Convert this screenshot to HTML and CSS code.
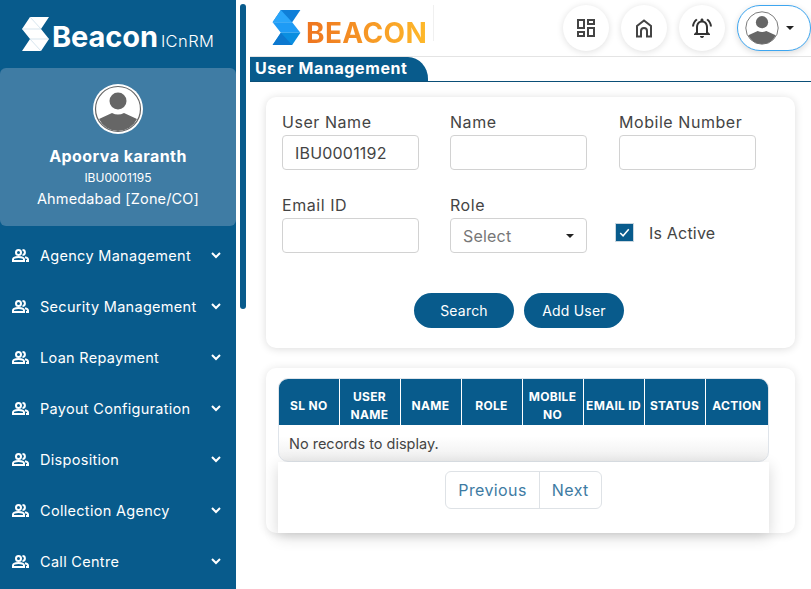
FILE: index.html
```html
<!DOCTYPE html>
<html>
<head>
  <title>Beacon | User Management</title>
  <meta charset="UTF-8">
  <meta name="viewport" content="width=device-width, initial-scale=1.0">
  <link rel="stylesheet" href="styles.css">
</head>
<body>
  <svg class="defs" width="0" height="0">
    <symbol id="avatar" viewBox="0 0 50 50">
      <circle cx="25" cy="25" r="25" fill="#fff"/>
      <circle cx="25" cy="25" r="22.500" fill="#fff" stroke="#666" stroke-width="1.200"/>
      <circle cx="25" cy="17" r="8.500" fill="#666"/>
      <path d="M6 35l13-6q6 3 12 0l13 6a21 21 0 0 1-38 0z" fill="#666"/>
    </symbol>
    <symbol id="users" viewBox="0 0 17 13">
      <path fill="none" stroke="#fff" stroke-width="2" d="M1 12v-1.500C1 9 3.500 8 6.500 8s5.500 1 5.500 2.500V12zM6.500 6a2.400 2.400 0 1 0 0-5 2.400 2.400 0 0 0 0 5z"/>
      <path fill="none" stroke="#fff" stroke-width="2" d="M10.500 1.100a2.400 2.400 0 0 1 0 4.800M13 8.200c1.700.4 3 1.200 3 2.300V12h-2"/>
    </symbol>
    <symbol id="chev" viewBox="0 0 10 7">
      <path fill="none" stroke="#fff" stroke-width="2" d="M1 1l4 4 4-4"/>
    </symbol>
  </svg>

  <aside class="sidebar">
    <div class="brand">
      <svg class="brand-mark" viewBox="0 0 27 34">
        <path fill="#fff" d="M8 0h19l-8 12 8 10-8 12H0l8-12-8-10z"/>
        <path fill="none" stroke="#bcd3e2" stroke-width=".6" d="M0 12h19M8 22h19M8 0l11 12M8 22l11 12"/>
      </svg>
      <span class="brand-name">Beacon</span>
      <span class="brand-sub">ICnRM</span>
    </div>

    <div class="profile">
      <svg class="profile-pic"><use href="#avatar"/></svg>
      <div class="profile-name">Apoorva karanth</div>
      <div class="profile-id">IBU0001195</div>
      <div class="profile-zone">Ahmedabad [Zone/CO]</div>
    </div>

    <ul class="menu">
      <li><svg class="menu-icon"><use href="#users"/></svg><span>Agency Management</span><svg class="menu-chev"><use href="#chev"/></svg></li>
      <li><svg class="menu-icon"><use href="#users"/></svg><span>Security Management</span><svg class="menu-chev"><use href="#chev"/></svg></li>
      <li><svg class="menu-icon"><use href="#users"/></svg><span>Loan Repayment</span><svg class="menu-chev"><use href="#chev"/></svg></li>
      <li><svg class="menu-icon"><use href="#users"/></svg><span>Payout Configuration</span><svg class="menu-chev"><use href="#chev"/></svg></li>
      <li><svg class="menu-icon"><use href="#users"/></svg><span>Disposition</span><svg class="menu-chev"><use href="#chev"/></svg></li>
      <li><svg class="menu-icon"><use href="#users"/></svg><span>Collection Agency</span><svg class="menu-chev"><use href="#chev"/></svg></li>
      <li><svg class="menu-icon"><use href="#users"/></svg><span>Call Centre</span><svg class="menu-chev"><use href="#chev"/></svg></li>
    </ul>
  </aside>

  <div class="gutter"><div class="thumb"></div></div>

  <div class="main">
    <header class="topbar">
      <div class="logo">
        <svg class="logo-mark" viewBox="0 0 27 34">
          <path fill="#0f7fd8" d="M8 0h19l-8 12H0z"/>
          <path fill="#1e9bf5" d="M0 12h19l8 10H8z"/>
          <path fill="#0a8ee0" d="M8 22h19l-8 12H0z"/>
          <path fill="#2aa6fa" d="M8 0l11 12H0z"/>
          <path fill="#0d78cf" d="M8 22l11 12H0z"/>
        </svg>
        <span class="logo-text">BEACON</span>
      </div>
      <div class="top-actions">
        <button class="round-btn">
          <svg viewBox="0 0 24 24"><path fill="#444" d="M19 5v2h-4V5h4M9 5v6H5V5h4m10 8v6h-4v-6h4M9 17v2H5v-2h4M21 3h-8v6h8V3zM11 3H3v10h8V3zm10 8h-8v10h8V11zm-10 4H3v6h8v-6z"/></svg>
        </button>
        <button class="round-btn">
          <svg viewBox="0 0 24 24"><path fill="none" stroke="#444" stroke-width="2" d="M5 20.500V10l7-5.500 7 5.500v10.500h-4V15a3 3 0 0 0-6 0v5.500z"/></svg>
        </button>
        <button class="round-btn">
          <svg viewBox="0 0 24 24"><path fill="#333" d="M7.580 4.080L6.150 2.650C3.750 4.480 2.170 7.300 2.030 10.500h2c.15-2.650 1.510-4.970 3.550-6.420zm12.390 6.420h2c-.15-3.200-1.730-6.020-4.120-7.850l-1.420 1.430c2.020 1.450 3.390 3.770 3.540 6.420zM18 11c0-3.070-1.640-5.640-4.500-6.320V4c0-.83-.67-1.500-1.500-1.500s-1.500.67-1.500 1.500v.68C7.630 5.360 6 7.920 6 11v5l-2 2v1h16v-1l-2-2v-5zm-2 6H8v-6c0-2.480 1.510-4.500 4-4.500s4 2.020 4 4.500v6zm-4 5c.14 0 .27-.01.4-.04.65-.14 1.180-.58 1.440-1.180.1-.24.15-.5.15-.78h-4c.01 1.100.9 2 2.010 2z"/></svg>
        </button>
        <button class="user-pill">
          <svg class="user-pic"><use href="#avatar"/></svg>
          <span class="caret"></span>
        </button>
      </div>
    </header>

    <div class="title-row">
      <h1 class="title-tab">User Management</h1>
    </div>

    <section class="card search-card">
      <div class="form-grid">
        <div class="field">
          <label>User Name</label>
          <input type="text" value="IBU0001192">
        </div>
        <div class="field">
          <label>Name</label>
          <input type="text">
        </div>
        <div class="field">
          <label>Mobile Number</label>
          <input type="text">
        </div>
        <div class="field">
          <label>Email ID</label>
          <input type="text">
        </div>
        <div class="field">
          <label>Role</label>
          <div class="select">Select<span class="caret"></span></div>
        </div>
        <div class="check-field">
          <span class="checkbox">
            <svg viewBox="0 0 18 18"><path fill="none" stroke="#fff" stroke-width="1.600" d="M4.500 9.500l3 3 6-7"/></svg>
          </span>
          <span class="check-label">Is Active</span>
        </div>
      </div>
      <div class="form-actions">
        <button class="pill-btn">Search</button>
        <button class="pill-btn">Add User</button>
      </div>
    </section>

    <section class="card table-card">
      <div class="table-wrap">
        <table class="grid">
          <thead>
            <tr>
              <th>SL NO</th>
              <th>USER NAME</th>
              <th>NAME</th>
              <th>ROLE</th>
              <th>MOBILE NO</th>
              <th>EMAIL ID</th>
              <th>STATUS</th>
              <th>ACTION</th>
            </tr>
          </thead>
          <tbody>
            <tr><td colspan="8">No records to display.</td></tr>
          </tbody>
        </table>
      </div>
      <div class="pager-panel">
        <div class="pager">
          <a class="pager-link">Previous</a>
          <a class="pager-link">Next</a>
        </div>
      </div>
    </section>
  </div>
</body>
</html>
```

FILE: styles.css
```css
* {
  box-sizing: border-box;
}

html, body {
  height: 100%;
}

body {
  margin: 0;
  display: flex;
  overflow: hidden;
  background-color: #fff;
  font-family: Inter, "Open Sans", sans-serif;
  color: #444;
}

.defs {
  position: absolute;
}

/* sidebar */
.sidebar {
  width: 236px;
  flex-shrink: 0;
  height: 100%;
  background-color: #085b8c;
  color: #fff;
  overflow: hidden;
}

.brand {
  display: flex;
  align-items: flex-end;
  height: 68px;
  padding: 17px 0 17px 22px;
}

.brand-mark {
  width: 27px;
  height: 34px;
  flex-shrink: 0;
}

.brand-name {
  margin-left: 3px;
  font-size: 29px;
  line-height: 28px;
  font-weight: 700;
  letter-spacing: -0.1px;
}

.brand-sub {
  margin-left: 3px;
  margin-bottom: 1px;
  font-size: 16.500px;
  line-height: 18px;
  font-weight: 300;
  letter-spacing: 0.4px;
}

.profile {
  height: 158px;
  background-color: #3f7ca4;
  border-radius: 6px;
  padding-top: 16px;
  text-align: center;
}

.profile-pic {
  display: block;
  width: 50px;
  height: 50px;
  margin: 0 auto;
}

.profile-name {
  margin-top: 12px;
  font-size: 16px;
  line-height: 20px;
  font-weight: 700;
  letter-spacing: 0.45px;
}

.profile-id {
  margin-top: 4px;
  font-size: 12px;
  line-height: 16px;
}

.profile-zone {
  margin-top: 4px;
  font-size: 14.500px;
  line-height: 18px;
  letter-spacing: 0.15px;
}

.menu {
  list-style-type: none;
  margin: 0;
  padding: 4px 0 0;
}

.menu li {
  display: flex;
  align-items: center;
  height: 51px;
  padding-left: 12px;
  font-size: 14.500px;
  letter-spacing: 0.3px;
}

.menu-icon {
  width: 17px;
  height: 13px;
  flex-shrink: 0;
}

.menu li span {
  margin-left: 11px;
  flex: 1;
  white-space: nowrap;
}

.menu-chev {
  width: 10px;
  height: 7px;
  margin-right: 15px;
  flex-shrink: 0;
}

/* fake scrollbar next to the sidebar */
.gutter {
  width: 14px;
  flex-shrink: 0;
  padding: 4px 0 0 4px;
}

.thumb {
  width: 6px;
  height: 305px;
  background-color: #085b8c;
  border-radius: 3px;
}

/* main column */
.main {
  flex: 1;
  min-width: 0;
}

.topbar {
  display: flex;
  align-items: flex-start;
  justify-content: space-between;
  height: 57px;
  border-bottom: 1px solid #e4e4e4;
}

.logo {
  display: flex;
  align-items: flex-start;
  height: 36px;
  width: 184px;
  margin-top: 5px;
  padding: 5px 0 0 22px;
  border-right: 1px solid #f0f0f0;
}

.logo-mark {
  width: 29px;
  height: 35px;
  flex-shrink: 0;
}

.logo-text {
  margin-left: 5px;
  margin-top: 8px;
  font-size: 28px;
  line-height: 30px;
  font-weight: 700;
  letter-spacing: 0.4px;
  background: linear-gradient(to right, #ee7420, #feb92a);
  -webkit-background-clip: text;
  background-clip: text;
  color: transparent;
}

.top-actions {
  display: flex;
  align-items: center;
  gap: 12px;
  padding-top: 5px;
}

.round-btn {
  display: flex;
  align-items: center;
  justify-content: center;
  width: 46px;
  height: 46px;
  padding: 0;
  background-color: #fff;
  border: none;
  border-radius: 50%;
  box-shadow: 0 1px 7px rgba(0, 0, 0, 0.13);
}

.round-btn svg {
  width: 24px;
  height: 24px;
}

.user-pill {
  display: flex;
  align-items: center;
  gap: 6px;
  width: 74px;
  height: 46px;
  padding: 0 0 0 6px;
  background-color: #fff;
  border: 1px solid #3ea6f0;
  border-radius: 23px;
  box-shadow: 0 2px 6px rgba(0, 0, 0, 0.15);
}

.user-pic {
  width: 36px;
  height: 36px;
}

.caret {
  display: block;
  width: 0;
  height: 0;
  border-left: 4px solid transparent;
  border-right: 4px solid transparent;
  border-top: 4px solid #222;
}

.title-row {
  height: 25px;
  border-bottom: 1px solid #0b4f78;
}

.title-tab {
  width: 178px;
  height: 24px;
  margin: 0;
  padding-left: 5px;
  background-color: #085b8c;
  border-top-right-radius: 20px 22px;
  color: #fff;
  font-size: 16px;
  line-height: 23px;
  font-weight: 700;
  letter-spacing: 0.6px;
  white-space: nowrap;
}

.card {
  width: 529px;
  margin-left: 16px;
  background-color: #fff;
  border-radius: 10px;
  box-shadow: 0 1px 8px rgba(0, 0, 0, 0.14);
}

.search-card {
  height: 251px;
  margin-top: 15px;
  padding: 16px;
}

.form-grid {
  display: grid;
  grid-template-columns: 168px 169px 136px;
  row-gap: 26px;
}

.field label {
  display: block;
  height: 22px;
  font-size: 16px;
  line-height: 19px;
  letter-spacing: 0.55px;
  color: #444;
}

.field input,
.select {
  display: block;
  width: 137px;
  height: 35px;
  padding: 0 12px;
  background-color: #fff;
  border: 1px solid #d2d2d2;
  border-radius: 4px;
  font-family: inherit;
  font-size: 16px;
  letter-spacing: 0.2px;
  color: #444;
  outline: none;
}

.select {
  display: flex;
  align-items: center;
  justify-content: space-between;
  color: #777;
}

.check-field {
  display: flex;
  align-items: center;
  margin-left: -4px;
  padding-top: 16px;
}

.checkbox {
  width: 19px;
  height: 19px;
  flex-shrink: 0;
  background-color: #085b8c;
  border: 1px solid #c9d6df;
}

.checkbox svg {
  display: block;
  width: 17px;
  height: 17px;
}

.check-label {
  margin-left: 15px;
  font-size: 16px;
  letter-spacing: 0.2px;
}

.form-actions {
  display: flex;
  gap: 10px;
  margin-top: 40px;
  padding-left: 132px;
}

.pill-btn {
  width: 100px;
  height: 35px;
  padding: 0;
  background-color: #085b8c;
  border: none;
  border-radius: 18px;
  color: #fff;
  font-family: inherit;
  font-size: 14px;
  letter-spacing: 0.2px;
}

.table-card {
  height: 165px;
  margin-top: 20px;
  padding: 10px 26px 0 12px;
  box-shadow: 0 1px 10px rgba(0, 0, 0, 0.12);
}

.table-wrap {
  height: 84px;
  border: 1px solid #dfe4ea;
  border-radius: 10px;
  overflow: hidden;
  background: linear-gradient(to bottom, #fff 70%, #eeeeee);
}

.grid {
  width: 100%;
  border-collapse: collapse;
  table-layout: fixed;
}

.grid th {
  width: 61px;
  height: 46px;
  padding: 8px 0 0;
  background-color: #085b8c;
  border-left: 1px solid #fff;
  color: #fff;
  font-size: 12px;
  line-height: 18px;
  font-weight: 700;
  letter-spacing: 0.3px;
  vertical-align: middle;
}

.grid th:first-child {
  width: 60px;
  border-left: none;
}

.grid th:last-child {
  width: auto;
}

.grid td {
  height: 36px;
  padding: 0 10px;
  font-size: 14.500px;
  color: #444;
}

.pager-panel {
  height: 71px;
  padding-top: 9px;
  background-color: #fff;
  box-shadow: 0 4px 14px rgba(0, 0, 0, 0.16);
  display: flex;
  justify-content: center;
  align-items: flex-start;
}

.pager {
  display: flex;
  height: 38px;
  border: 1px solid #dee2e6;
  border-radius: 6px;
}

.pager-link {
  display: flex;
  align-items: center;
  padding: 0 12px;
  font-size: 16px;
  letter-spacing: 0.4px;
  color: #3d7ba3;
}

.pager-link + .pager-link {
  border-left: 1px solid #dee2e6;
}
```
